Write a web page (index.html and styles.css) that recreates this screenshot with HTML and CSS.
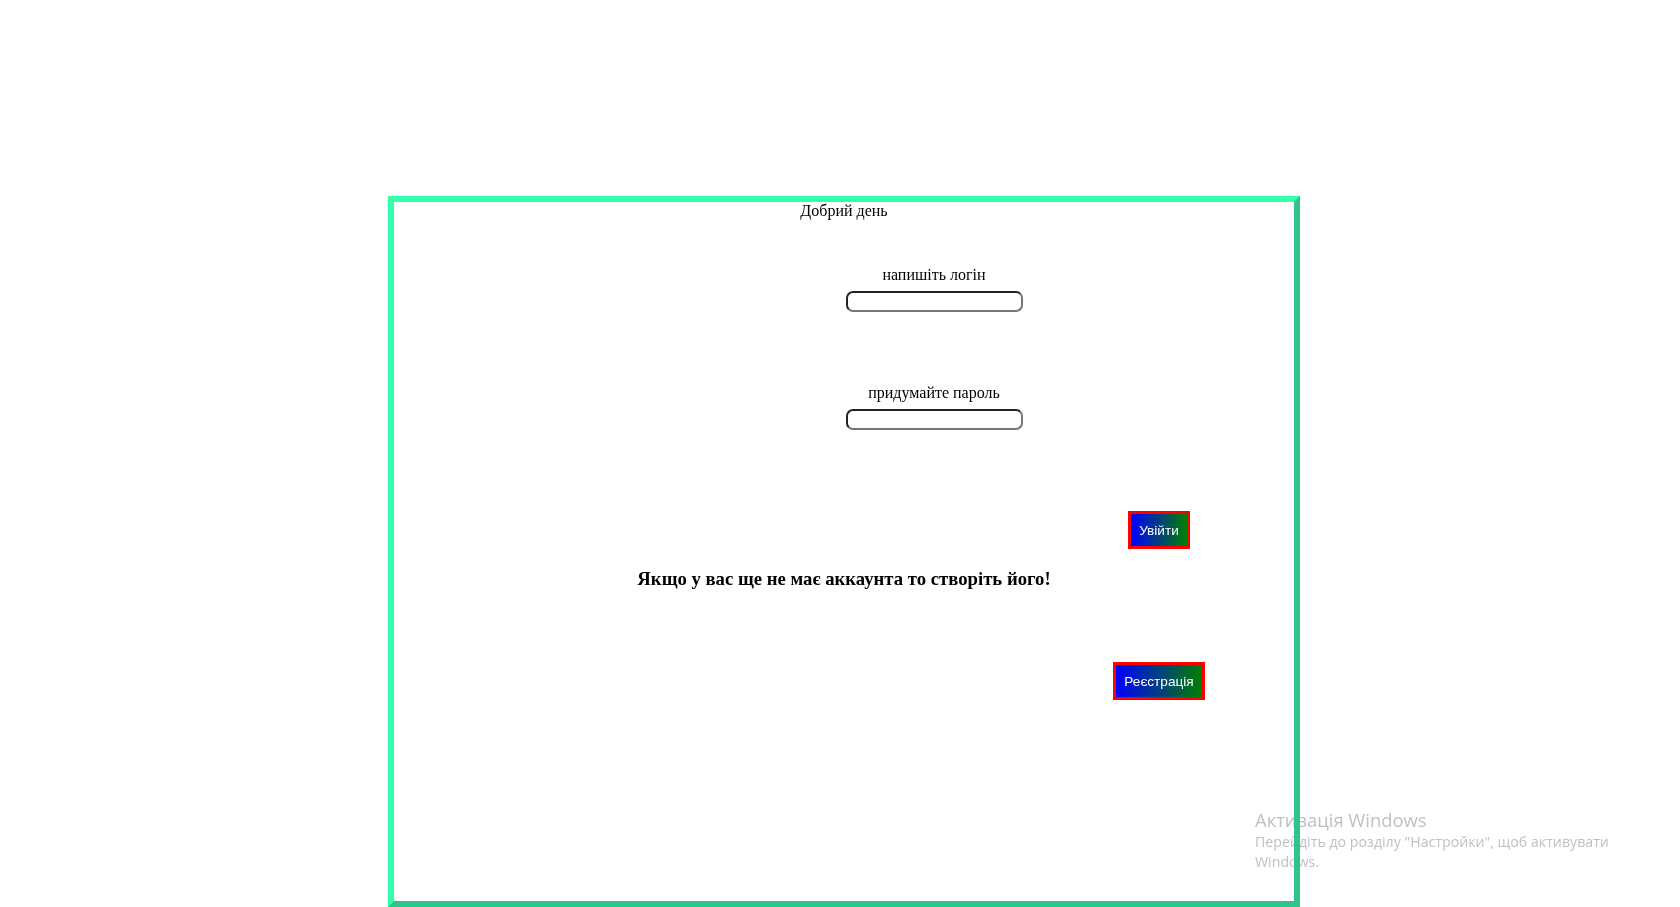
FILE: index.html
```html
<!DOCTYPE html>
<html lang="uk">
<head>
<meta charset="utf-8">
<title>Вхід</title>
<link rel="stylesheet" href="styles.css">
</head>
<body>
<div class="panel">
  <div class="greet">Добрий день</div>
  <div class="field field-login">
    <label class="field-label" for="login">напишіть логін</label>
    <input class="field-input" id="login" type="text">
  </div>
  <div class="field field-pass">
    <label class="field-label" for="pass">придумайте пароль</label>
    <input class="field-input" id="pass" type="password">
  </div>
  <div class="action action-login">
    <button class="btn" type="button">Увійти</button>
  </div>
  <h3 class="prompt">Якщо у вас ще не має аккаунта то створіть його!</h3>
  <div class="action action-reg">
    <button class="btn" type="button">Реєстрація</button>
  </div>
</div>
<div class="watermark">
  <div class="wm-title">Активація Windows</div>
  <div class="wm-text">Перейдіть до розділу "Настройки", щоб активувати<br>Windows.</div>
</div>
</body>
</html>
```
FILE: styles.css
```css
html, body {
  margin: 0;
  padding: 0;
  background: #ffffff;
}

body {
  font-family: "Liberation Serif", "Times New Roman", serif;
  font-size: 16px;
  color: #000;
  overflow: hidden;
}

.panel {
  position: relative;
  z-index: 1;
  box-sizing: content-box;
  width: 900px;
  height: 699px;
  margin: 196px 0 0 388px;
  border: 6px solid;
  border-color: #33ffaa #2ec48a #2ec48a #33ffaa;
  display: flex;
  flex-direction: column;
}

.greet {
  text-align: center;
  line-height: 18px;
  height: 18px;
}

.field {
  margin-left: 180px;
  display: flex;
  flex-direction: column;
  align-items: center;
}

.field-login {
  margin-top: 46px;
}

.field-pass {
  margin-top: 72px;
}

.field-label {
  line-height: 18px;
  height: 18px;
}

.field-input {
  box-sizing: border-box;
  width: 177px;
  height: 21px;
  margin-top: 7px;
  padding: 1px 4px;
  border: 2px solid;
  border-color: #222222 #767676 #767676 #222222;
  border-radius: 7px;
  background: #fff;
  font-family: "Liberation Sans", Arial, sans-serif;
  font-size: 13.33px;
}

.action {
  margin-left: 630px;
  display: flex;
  justify-content: center;
}

.action-login {
  margin-top: 81px;
}

.action-reg {
  margin-top: 73px;
}

.btn {
  box-sizing: border-box;
  height: 38px;
  padding: 0 8px;
  border: 3px solid #ff0000;
  background: linear-gradient(to right, #0000ff, #008000);
  color: #ffffff;
  font-family: "Liberation Sans", Arial, sans-serif;
  font-size: 13.6px;
  line-height: 15px;
  cursor: pointer;
}

.prompt {
  margin: 19px 0 0 0;
  text-align: center;
  font-size: 18.72px;
  font-weight: bold;
  line-height: 21px;
}

.watermark {
  position: fixed;
  left: 1255px;
  top: 808px;
  z-index: 0;
  color: #c0c0c0;
  font-family: "Open Sans", "Noto Sans", sans-serif;
  pointer-events: none;
}

.wm-title {
  font-size: 18.4px;
  font-weight: 400;
  line-height: 24px;
}

.wm-text {
  font-size: 14.2px;
  line-height: 20px;
}
```
